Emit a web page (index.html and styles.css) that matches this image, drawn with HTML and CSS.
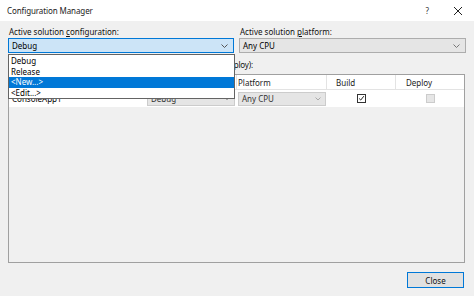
FILE: index.html
```html
<!DOCTYPE html>
<html lang="en">
<head>
    <meta charset="UTF-8">
    <title>Configuration Manager</title>
    <link rel="stylesheet" href="styles.css">
</head>
<body>
    <div class="window">
        <div class="titlebar">
            <span class="title">Configuration Manager</span>
            <div class="controls">
                <span class="help">?</span>
                <svg class="close-x" width="10" height="10" viewBox="0 0 10 10"><path d="M1 1L9 9M9 1L1 9" stroke="#222" stroke-width="1"/></svg>
            </div>
        </div>
        <div class="dialog">
            <div class="top-row">
                <div class="field">
                    <label class="label">Active solution <u>c</u>onfiguration:</label>
                    <div class="combo combo-focus">
                        <span>Debug</span>
                        <svg class="chev" width="7" height="4" viewBox="0 0 7 4"><path d="M0.5 0.5L3.5 3.5L6.5 0.5" fill="none" stroke="#555" stroke-width="1"/></svg>
                    </div>
                    <div class="dropdown">
                        <div class="item">Debug</div>
                        <div class="item">Release</div>
                        <div class="item selected">&lt;New...&gt;</div>
                        <div class="item">&lt;Edit...&gt;</div>
                    </div>
                </div>
                <div class="field">
                    <label class="label">Active solution <u>p</u>latform:</label>
                    <div class="combo">
                        <span>Any CPU</span>
                        <svg class="chev" width="7" height="4" viewBox="0 0 7 4"><path d="M0.5 0.5L3.5 3.5L6.5 0.5" fill="none" stroke="#777" stroke-width="1"/></svg>
                    </div>
                </div>
            </div>

            <div class="label contexts">Project contexts (check the project configurations to build or deploy):</div>

            <div class="grid">
                <div class="row header">
                    <div class="cell c-project">Project</div>
                    <div class="cell c-config">Configuration</div>
                    <div class="cell c-platform">Platform</div>
                    <div class="cell c-build">Build</div>
                    <div class="cell c-deploy">Deploy</div>
                </div>
                <div class="row">
                    <div class="cell c-project">ConsoleApp1</div>
                    <div class="cell c-config">
                        <div class="cell-combo"><span>Debug</span><svg class="chev" width="6" height="4" viewBox="0 0 6 4"><path d="M0.5 0.5L3 3L5.5 0.5" fill="none" stroke="#aaa" stroke-width="1"/></svg></div>
                    </div>
                    <div class="cell c-platform">
                        <div class="cell-combo"><span>Any CPU</span><svg class="chev" width="6" height="4" viewBox="0 0 6 4"><path d="M0.5 0.5L3 3L5.5 0.5" fill="none" stroke="#aaa" stroke-width="1"/></svg></div>
                    </div>
                    <div class="cell c-build center">
                        <span class="check">
                            <svg width="9" height="9" viewBox="0 0 9 9"><path d="M1.5 4.5L3.5 6.5L7.5 1.5" fill="none" stroke="#111" stroke-width="1.2"/></svg>
                        </span>
                    </div>
                    <div class="cell c-deploy center">
                        <span class="check disabled"></span>
                    </div>
                </div>
            </div>

            <div class="footer">
                <button class="btn">Close</button>
            </div>
        </div>
    </div>
</body>
</html>
```

FILE: styles.css
```css
html, body {
    margin: 0;
    padding: 0;
    background: #ffffff;
}

body {
    font-family: 'Noto Sans', 'Open Sans', sans-serif;
    font-size: 8px;
    color: #000000;
    width: 474px;
    height: 299px;
    overflow: hidden;
}

.window {
    width: 474px;
}

.titlebar {
    height: 21px;
    background: #ffffff;
    display: flex;
    align-items: center;
    justify-content: space-between;
    padding: 0 11px 0 7px;
}

.title {
    color: #222;
    letter-spacing: -0.1px;
}

.controls {
    display: flex;
    align-items: center;
    gap: 24px;
}

.help {
    color: #333;
}

.close-x {
    display: block;
}

.dialog {
    background: #f0f0f0;
    height: 275px;
    padding: 5px 9px 0 8px;
    box-sizing: border-box;
    display: flex;
    flex-direction: column;
}

.top-row {
    display: grid;
    grid-template-columns: 226px 227px;
    column-gap: 5px;
}

.field {
    position: relative;
}

.label {
    height: 12px;
    line-height: 12px;
    margin-bottom: 1px;
    padding-left: 1px;
    color: #111;
    white-space: nowrap;
}

.label u {
    text-decoration-thickness: 1px;
}

.combo {
    height: 15px;
    box-sizing: border-box;
    border: 1px solid #adadad;
    background: #e5e5e5;
    display: flex;
    align-items: center;
    justify-content: space-between;
    padding: 0 5px 0 3px;
}

.combo-focus {
    border-color: #0078d7;
    background: #cce4f7;
}

.dropdown {
    position: absolute;
    left: 0;
    top: 28px;
    width: 227px;
    box-sizing: border-box;
    border: 1px solid #646464;
    background: #ffffff;
    z-index: 5;
    padding: 1px 0 0;
}

.item {
    height: 10.5px;
    line-height: 10.5px;
    padding-left: 2px;
}

.item.selected {
    background: #0078d7;
    color: #ffffff;
}

.contexts {
    margin-top: 6px;
    letter-spacing: -0.2px;
}

.grid {
    margin-top: 2px;
    height: 189px;
    box-sizing: border-box;
    border: 1px solid #a0a0a0;
    background: #f0f0f0;
}

.row {
    display: flex;
    height: 17px;
    background: #ffffff;
    border-bottom: 1px solid #f0f0f0;
    align-items: center;
}

.row.header {
    height: 14px;
    border-bottom: 1px solid #e3e3e3;
}

.cell {
    height: 100%;
    box-sizing: border-box;
    display: flex;
    align-items: center;
    white-space: nowrap;
}

.header .cell {
    border-right: 1px solid #e3e3e3;
    color: #222;
}

.header .cell:last-child {
    border-right: none;
}

.c-project { width: 136px; padding-left: 3px; }
.c-config { width: 92px; padding-left: 2px; }
.c-platform { width: 90px; padding-left: 1px; }
.c-build { width: 69px; padding-left: 9px; }
.c-deploy { width: 68px; padding-left: 10px; }

.cell.center {
    justify-content: center;
    padding-left: 0;
}

.cell-combo {
    width: 88px;
    height: 14px;
    box-sizing: border-box;
    border: 1px solid #cccccc;
    background: #e5e5e5;
    display: flex;
    align-items: center;
    justify-content: space-between;
    padding: 0 4px 0 3px;
    color: #333;
}

.check {
    width: 9px;
    height: 9px;
    box-sizing: border-box;
    border: 1px solid #333;
    background: #ffffff;
    display: flex;
    align-items: center;
    justify-content: center;
}

.check svg {
    display: block;
}

.check.disabled {
    border-color: #cccccc;
    background: #e6e6e6;
}

.footer {
    display: flex;
    justify-content: flex-end;
    margin-top: 9px;
    padding-right: 1px;
}

.btn {
    width: 57px;
    height: 16px;
    box-sizing: border-box;
    border: 1px solid #0078d7;
    background: #e1e1e1;
    font-family: 'Noto Sans', 'Open Sans', sans-serif;
    font-size: 8px;
    color: #111;
    padding: 0;
}
```
